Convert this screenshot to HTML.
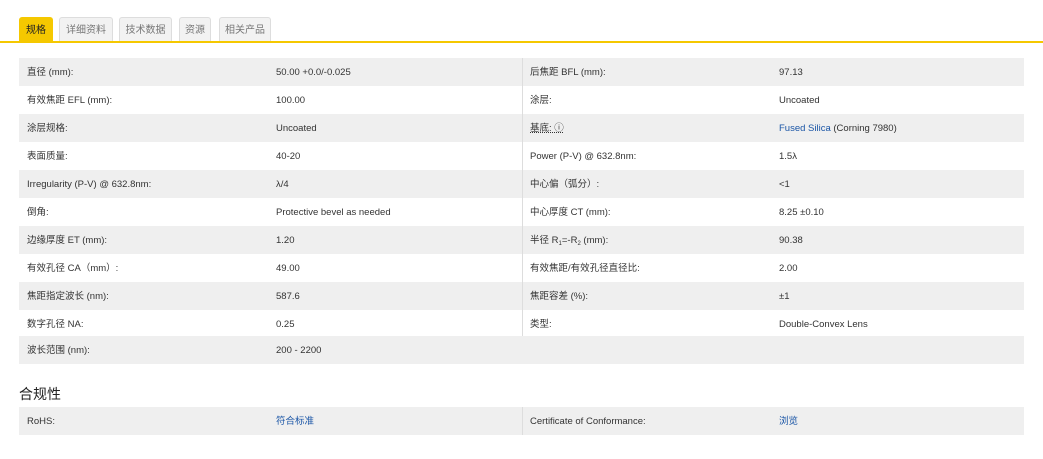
<!DOCTYPE html>
<html><head><meta charset="utf-8"><style>
*{margin:0;padding:0;box-sizing:border-box}
body{width:1043px;height:459px;background:#fff;font-family:"Liberation Sans","Noto Sans CJK SC",sans-serif;color:#333;position:relative;overflow:hidden;font-size:10px}
.tab{position:absolute;top:17px;height:25px;background:#f2f2f2;border:1px solid #ddd;border-bottom:none;border-radius:3px 3px 0 0;color:#777;font-size:10px;line-height:26px;text-align:center}
.tab.on{background:#f5c800;border-color:#f5c800;color:#222}
.line{position:absolute;top:41px;left:0;width:1043px;height:2px;background:#f5c800}
.row{position:absolute;left:19px;width:1005px;height:28px;line-height:30px;font-size:9.5px}
.g{background:#efefef}
.row span{position:absolute;top:0}
.a{left:8px}.b{left:257px}.c{left:511px}.d{left:760px}
.dv{position:absolute;left:503px;top:0;width:1px;height:28px;background:#ddd}
.lk{color:#1a55a6}
h3{position:absolute;left:19px;top:384px;font-size:14px;font-weight:normal;color:#222}
sub{font-size:6px;vertical-align:-2px}
</style></head><body>
<div class="tab on" style="left:19px;width:34px">规格</div>
<div class="tab" style="left:59px;width:54px">详细资料</div>
<div class="tab" style="left:119px;width:53px">技术数据</div>
<div class="tab" style="left:179px;width:32px">资源</div>
<div class="tab" style="left:219px;width:52px">相关产品</div>
<div class="line"></div>

<div class="row g" style="top:58px"><span class="a">直径 (mm):</span><span class="b">50.00 +0.0/-0.025</span><i class="dv"></i><span class="c">后焦距 BFL (mm):</span><span class="d">97.13</span></div>
<div class="row" style="top:86px"><span class="a">有效焦距 EFL (mm):</span><span class="b">100.00</span><i class="dv"></i><span class="c">涂层:</span><span class="d">Uncoated</span></div>
<div class="row g" style="top:114px"><span class="a">涂层规格:</span><span class="b">Uncoated</span><i class="dv"></i><span class="c" style="text-decoration:underline dotted">基底: ⓘ</span><span class="d"><span class="lk" style="position:static">Fused Silica</span> (Corning 7980)</span></div>
<div class="row" style="top:142px"><span class="a">表面质量:</span><span class="b">40-20</span><i class="dv"></i><span class="c">Power (P-V) @ 632.8nm:</span><span class="d">1.5λ</span></div>
<div class="row g" style="top:170px"><span class="a">Irregularity (P-V) @ 632.8nm:</span><span class="b">λ/4</span><i class="dv"></i><span class="c">中心偏（弧分）:</span><span class="d">&lt;1</span></div>
<div class="row" style="top:198px"><span class="a">倒角:</span><span class="b">Protective bevel as needed</span><i class="dv"></i><span class="c">中心厚度 CT (mm):</span><span class="d">8.25 ±0.10</span></div>
<div class="row g" style="top:226px"><span class="a">边缘厚度 ET (mm):</span><span class="b">1.20</span><i class="dv"></i><span class="c">半径 R<sub>1</sub>=-R<sub>2</sub> (mm):</span><span class="d">90.38</span></div>
<div class="row" style="top:254px"><span class="a">有效孔径 CA（mm）:</span><span class="b">49.00</span><i class="dv"></i><span class="c">有效焦距/有效孔径直径比:</span><span class="d">2.00</span></div>
<div class="row g" style="top:282px"><span class="a">焦距指定波长 (nm):</span><span class="b">587.6</span><i class="dv"></i><span class="c">焦距容差 (%):</span><span class="d">±1</span></div>
<div class="row" style="top:310px"><span class="a">数字孔径 NA:</span><span class="b">0.25</span><i class="dv"></i><span class="c">类型:</span><span class="d">Double-Convex Lens</span></div>
<div class="row g" style="top:336px"><span class="a">波长范围 (nm):</span><span class="b">200 - 2200</span></div>

<h3>合规性</h3>
<div class="row g" style="top:407px"><span class="a">RoHS:</span><span class="b lk">符合标准</span><i class="dv"></i><span class="c">Certificate of Conformance:</span><span class="d lk">浏览</span></div>
</body></html>
